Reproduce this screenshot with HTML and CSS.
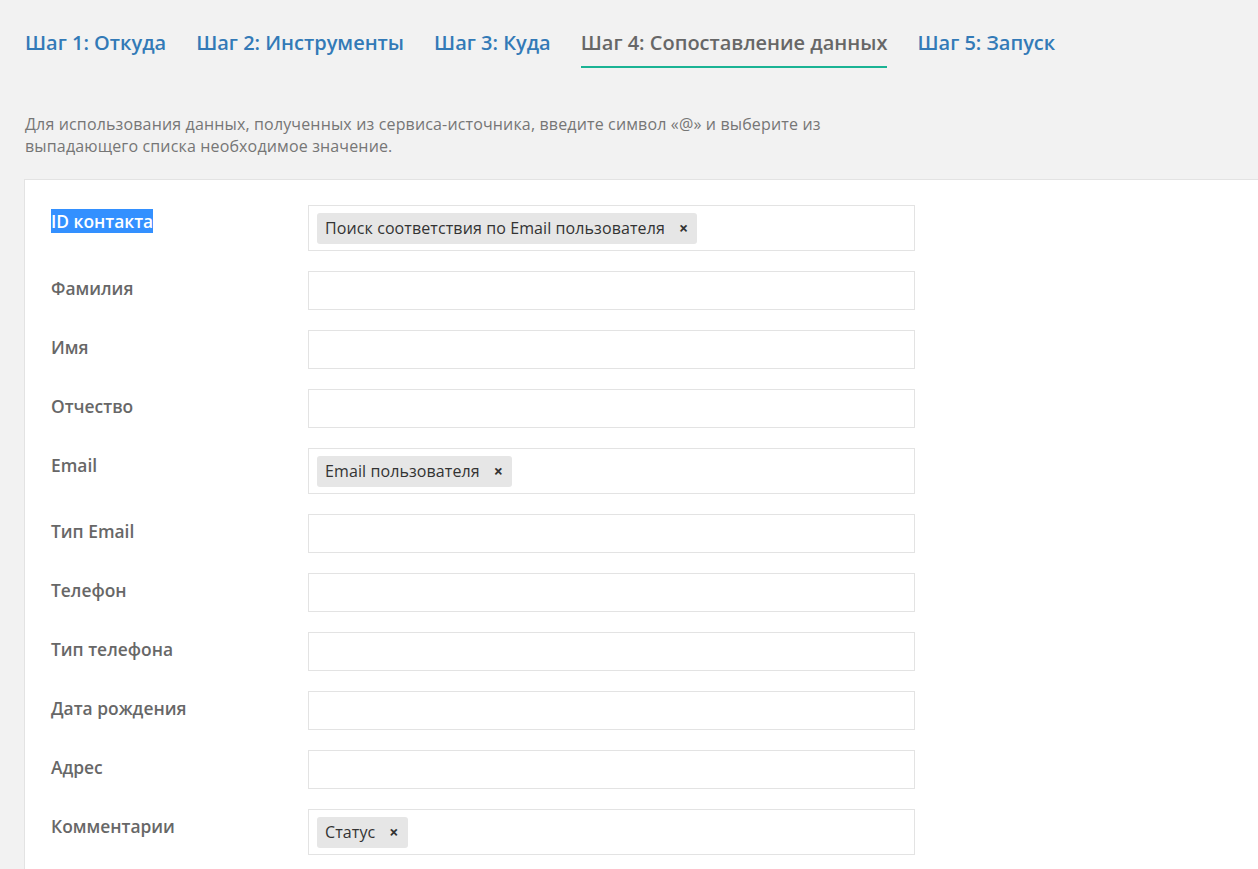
FILE: index.html
```html
<!DOCTYPE html>
<html lang="ru">
<head>
<meta charset="utf-8">
<link rel="stylesheet" href="styles.css">
</head>
<body>
<div class="page">
  <nav class="tabs">
    <a class="tab">Шаг 1: Откуда</a>
    <a class="tab">Шаг 2: Инструменты</a>
    <a class="tab">Шаг 3: Куда</a>
    <a class="tab active">Шаг 4: Сопоставление данных</a>
    <a class="tab">Шаг 5: Запуск</a>
  </nav>
  <p class="hint">Для использования данных, полученных из сервиса-источника, введите символ «@» и выберите из выпадающего списка необходимое значение.</p>
  <div class="panel">
    <div class="row">
      <div class="label"><span class="selected">ID контакта</span></div>
      <div class="field has-tag"><span class="tag">Поиск соответствия по Email пользователя<span class="x">×</span></span></div>
    </div>
    <div class="row"><div class="label">Фамилия</div><div class="field"></div></div>
    <div class="row"><div class="label">Имя</div><div class="field"></div></div>
    <div class="row"><div class="label">Отчество</div><div class="field"></div></div>
    <div class="row">
      <div class="label">Email</div>
      <div class="field has-tag"><span class="tag">Email пользователя<span class="x">×</span></span></div>
    </div>
    <div class="row"><div class="label">Тип Email</div><div class="field"></div></div>
    <div class="row"><div class="label">Телефон</div><div class="field"></div></div>
    <div class="row"><div class="label">Тип телефона</div><div class="field"></div></div>
    <div class="row"><div class="label">Дата рождения</div><div class="field"></div></div>
    <div class="row"><div class="label">Адрес</div><div class="field"></div></div>
    <div class="row">
      <div class="label">Комментарии</div>
      <div class="field has-tag"><span class="tag">Статус<span class="x">×</span></span></div>
    </div>
  </div>
</div>
</body>
</html>
```
FILE: styles.css
```css
html, body {
  margin: 0;
  padding: 0;
  background: #f2f2f2;
  font-family: "Open Sans", "Liberation Sans", sans-serif;
  overflow: hidden;
}
.page {
  padding: 29px 0 0 25px;
}
.tabs {
  display: flex;
  gap: 30px;
}
.tab {
  font-size: 20px;
  font-weight: 600;
  line-height: 28px;
  color: #337ab7;
  padding-bottom: 9px;
  border-bottom: 2px solid transparent;
}
.tab.active {
  color: #676767;
  border-bottom-color: #1ab394;
}
.hint {
  margin: 45px 0 0 0;
  max-width: 850px;
  font-size: 16px;
  letter-spacing: 0.15px;
  line-height: 22px;
  color: #767676;
}
.panel {
  margin-top: 22px;
  margin-left: -1px;
  background: #fff;
  border: 1px solid #e3e3e3;
  border-right: none;
  padding: 25px 0 20px 26px;
  display: flex;
  flex-direction: column;
  gap: 20px;
}
.row {
  display: flex;
  align-items: flex-start;
}
.label {
  width: 257px;
  flex: none;
  font-size: 17.4px;
  font-weight: 600;
  line-height: 22px;
  color: #676767;
  padding-top: 6px;
}
.row:first-child .label {
  padding-top: 5px;
}
.selected {
  background: #3390ff;
  color: #fff;
}
.field {
  width: 605px;
  height: 37px;
  border: 1px solid #e3e3e3;
  background: #fff;
  box-sizing: content-box;
}
.field.has-tag {
  height: 44px;
  display: flex;
  align-items: center;
  padding-left: 8px;
  width: 597px;
}
.tag {
  display: inline-flex;
  align-items: center;
  background: #e6e6e6;
  border-radius: 3px;
  height: 31px;
  padding: 0 9px 0 8px;
  font-size: 16px;
  letter-spacing: 0.1px;
  color: #333;
}
.x {
  margin-left: 14px;
  font-size: 16px;
  font-weight: 700;
  color: #333;
}
```
